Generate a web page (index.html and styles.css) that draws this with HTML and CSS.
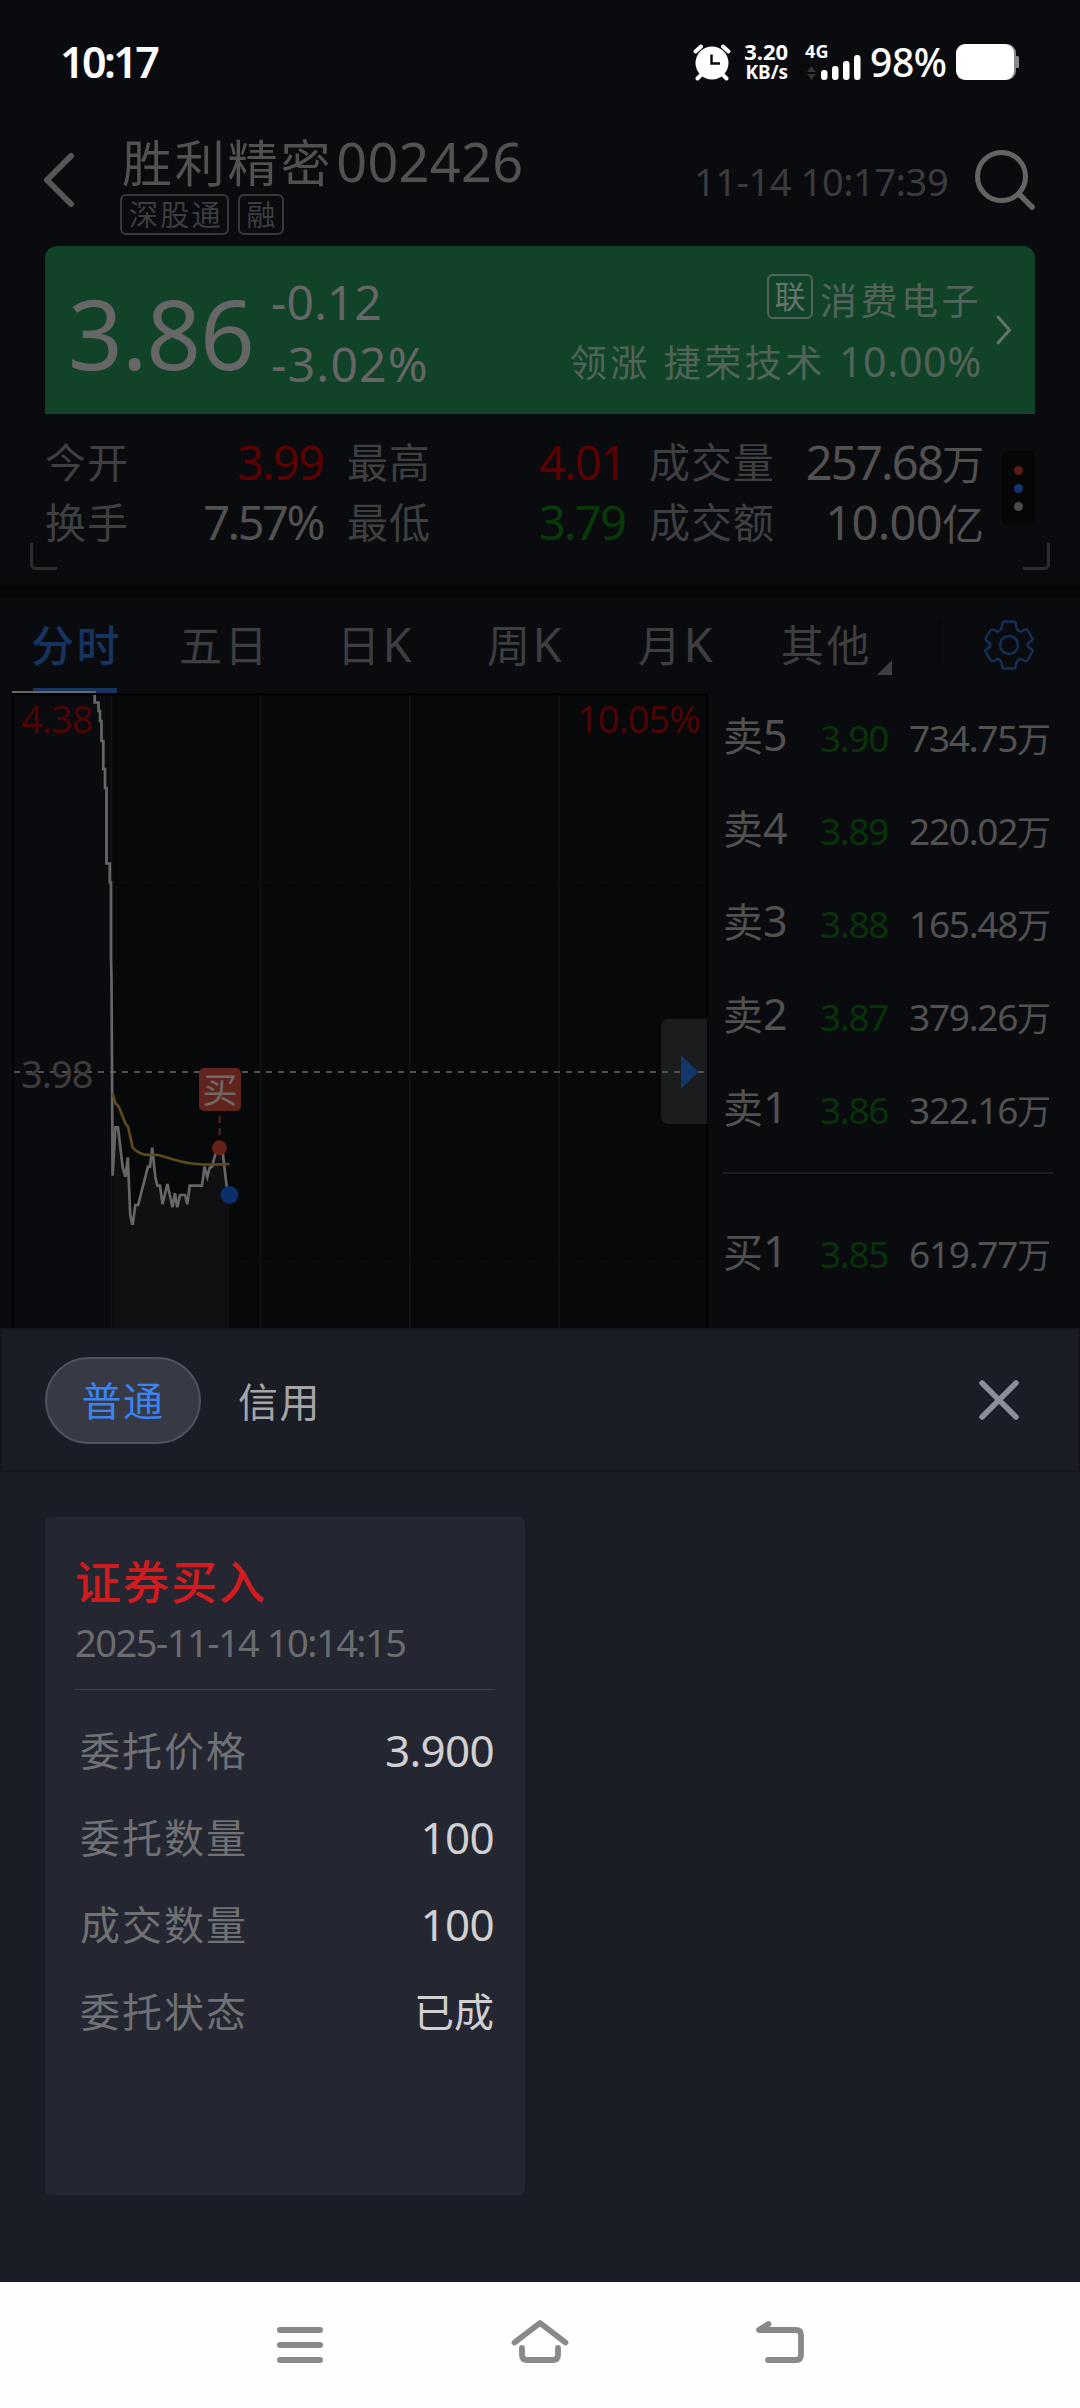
FILE: index.html
```html
<!DOCTYPE html>
<html lang="zh-CN">
<head>
    <meta charset="UTF-8">
    <meta name="viewport" content="width=device-width, initial-scale=1.0">
    <title>胜利精密 002426</title>
    <link rel="stylesheet" href="styles.css">
</head>
<body>
    <div class="status-bar">
        <span class="clock">10:17</span>
        <svg class="alarm" width="38" height="38" viewBox="0 0 38 38">
            <circle cx="19" cy="20" r="16.5" fill="#fff"/>
            <path d="M2.5 8.5L8 3.5M35.500 8.500L30 3.500M8 32L4.500 35.500M30 32L33.500 35.500" stroke="#fff" stroke-width="4" stroke-linecap="round"/>
            <path d="M18.500 11.500V20.500H27" fill="none" stroke="#0a0b0f" stroke-width="2.500"/>
        </svg>
        <div class="speed"><span>3.20</span><span>KB/s</span></div>
        <div class="network">
            <span class="net-type">4G</span>
            <svg width="56" height="36" viewBox="0 0 56 36">
                <path d="M2 28L6.500 22L11 28ZM2 30L6.500 36L11 30Z" fill="#333"/>
                <g fill="#fff">
                    <rect x="16" y="26" width="6.500" height="10" rx="3"/>
                    <rect x="27" y="22" width="6.500" height="14" rx="3"/>
                    <rect x="38" y="17" width="6.500" height="19" rx="3"/>
                    <rect x="49" y="11" width="6.500" height="25" rx="3"/>
                </g>
            </svg>
        </div>
        <span class="percent">98%</span>
        <svg class="battery" width="64" height="36" viewBox="0 0 64 36">
            <rect x="2" y="0" width="58" height="36" rx="9" fill="#8a8a8a"/>
            <rect x="59" y="12" width="4" height="12" rx="1.500" fill="#8a8a8a"/>
            <rect x="0" y="0" width="58" height="36" rx="9" fill="#fff"/>
        </svg>
    </div>

    <div class="header">
        <svg class="back" width="34" height="60" viewBox="0 0 34 60">
            <path d="M29 6L5 30L29 54" fill="none" stroke="#575757" stroke-width="6" stroke-linecap="round" stroke-linejoin="round"/>
        </svg>
        <div class="stock">
            <div class="stock-name">胜利精密<span class="code">002426</span></div>
            <div class="tags"><span class="tag">深股通</span><span class="tag">融</span></div>
        </div>
        <span class="time">11-14 10:17:39</span>
        <svg class="search" width="66" height="66" viewBox="0 0 66 66">
            <circle cx="30.500" cy="29.500" r="24" fill="none" stroke="#646464" stroke-width="5"/>
            <path d="M48 47L61 60" stroke="#646464" stroke-width="5.500" stroke-linecap="round"/>
        </svg>
    </div>

    <div class="banner">
        <span class="price">3.86</span>
        <div class="change"><span>-0.12</span><span class="change-rate">-3.02%</span></div>
        <div class="sector">
            <div class="sector-row"><span class="link-tag">联</span>消费电子</div>
            <div class="sector-row leader">领涨 捷荣技术 <span class="rate">10.00%</span></div>
        </div>
        <svg width="18" height="32" viewBox="0 0 18 32">
            <path d="M3 3L14.500 16L3 29" fill="none" stroke="#65746b" stroke-width="3" stroke-linecap="round" stroke-linejoin="round"/>
        </svg>
    </div>

    <div class="stats">
        <div class="stats-grid">
            <div class="stat"><span>今开</span><b class="red">3.99</b></div>
            <div class="stat"><span>最高</span><b class="red">4.01</b></div>
            <div class="stat"><span>成交量</span><b>257.68<i>万</i></b></div>
            <div class="stat"><span>换手</span><b class="turnover">7.57%</b></div>
            <div class="stat"><span>最低</span><b class="green">3.79</b></div>
            <div class="stat"><span>成交额</span><b class="amount">10.00<i>亿</i></b></div>
        </div>
        <div class="dots"><span class="dot dot-red"></span><span class="dot dot-blue"></span><span class="dot dot-gray"></span></div>
    </div>
    <div class="corners"><span class="corner corner-left"></span><span class="corner corner-right"></span></div>

    <div class="tabs">
        <span class="tab active">分时</span>
        <span class="tab">五日</span>
        <span class="tab">日<em>K</em></span>
        <span class="tab">周<em>K</em></span>
        <span class="tab">月<em>K</em></span>
        <span class="tab">其他</span>
        <span class="triangle"></span>
        <span class="separator"></span>
        <svg class="gear" width="52" height="52" viewBox="0 0 52 52" fill="none" stroke="#14315a" stroke-width="2.300" stroke-linejoin="round">
            <path d="M21 2.500H31Q32.500 2.500 32.700 4L33.500 9Q34 11 36 12L37.500 12.700L42 10.500Q43.500 10 44.300 11L49.300 19Q50 20.500 48.800 21.500L45 24.500Q44 26 45 27.500L48.800 30.500Q50 31.500 49.300 33L44.300 41.500Q43.500 42.500 42 42L37.500 39.700L36 40.500Q34 41.500 33.500 43.500L32.700 48Q32.500 49.500 31 49.500H21Q19.500 49.500 19.300 48L18.500 43.500Q18 41.500 16 40.500L14.500 39.700L10 42Q8.500 42.500 7.700 41.500L2.700 33Q2 31.500 3.200 30.500L7 27.500Q8 26 7 24.500L3.200 21.500Q2 20.500 2.700 19L7.700 11Q8.500 10 10 10.500L14.500 12.700L16 12Q18 11 18.500 9L19.300 4Q19.500 2.500 21 2.500Z"/>
            <circle cx="26" cy="26" r="9"/>
        </svg>
    </div>

    <div class="quote">
        <svg class="chart" width="708" height="638" viewBox="0 690 708 638">
            <rect x="12" y="694" width="696" height="634" fill="#060809"/>
            <rect x="12" y="694" width="99" height="634" fill="#0a0b0f"/>
            <path d="M112.600 1175.700L115.400 1127.300H118L122.600 1166.700L125 1175.700L127.800 1157.300L130.200 1214.300L132 1223.700L135.300 1205L138 1205L148 1166.700L152.200 1147.700L155.300 1176.700L160 1185.700L162.500 1204.300L167.400 1184L172.500 1207.300L174.900 1193.300L177.300 1207.300L180 1195H185L187.300 1204.300L189.700 1185.700H202L204.500 1166.700L207.300 1177L212 1166.700L219.400 1147.700L222.800 1153.300L229.300 1195V1328H112.600Z" fill="#101012"/>
            <g stroke="#131418" stroke-width="1.500">
                <path d="M111.500 694V1328M260.500 694V1328M410 694V1328M558.800 694V1328"/>
            </g>
            <path d="M38 882.500H704M229 1261.500H704" stroke="#0c0d0f" stroke-width="1.500" stroke-dasharray="6 6"/>
            <path d="M12 694.500H708M13 694V1328M707 694V1328" stroke="#010102" stroke-width="2"/>
            <path d="M14 1072H704" stroke="#515151" stroke-width="2" stroke-dasharray="6 6"/>

            <text class="chart-label red" x="21" y="733">4.38</text>
            <text class="chart-label red" x="577" y="733">10.05%</text>
            <text class="chart-label" x="21" y="1088">3.98</text>

            <g fill="none" stroke="#666" stroke-width="2.700">
                <path d="M12 692H96" stroke-width="2"/>
                <path d="M94.700 695V702.500H98.500V711H100V721H101.500V741H103.300V769H105V788H106.500V863.500H109.800V882.500H111V957L111.500 980L112.600 1175.700L115.400 1127.300H118L122.600 1166.700L125 1175.700H125.700L127.800 1157.300L130.200 1214.300L132 1223.700H132.900L135.300 1205H138.100L148 1166.700H150L152.200 1147.700L155.300 1176.700L157.400 1185.700H160L162.500 1204.300L167.400 1184L172.500 1207.300L174.900 1193.300L177.300 1207.300L180 1195H185L187.300 1204.300L189.700 1185.700H202L204.500 1166.700L207.300 1177L209.700 1167.700L212 1166.700L216 1151.700L219.400 1147.700L222.800 1153.300L226.600 1185.700L229.300 1195"/>
            </g>
            <path d="M112.600 1093.300L115.400 1103.300L118.800 1106.700L125.700 1124L128 1126.700L132.600 1147.300Q136 1152 144.600 1154.700L158.400 1155L179 1161Q192 1164.700 213.500 1164.700L229.500 1164" fill="none" stroke="#5e4a1d" stroke-width="2.700"/>

            <rect x="199" y="1068" width="42" height="43" rx="5" fill="#60241d"/>
            <text class="buy-mark" x="220" y="1102.500">买</text>
            <path d="M219.600 1116V1136" stroke="#64231c" stroke-width="1.800" stroke-dasharray="7 5"/>
            <circle cx="219.400" cy="1147.700" r="7.500" fill="#642019"/>
            <circle cx="229.500" cy="1195" r="9" fill="#0a2f69"/>

            <path d="M707 1019H669Q661 1019 661 1027V1116Q661 1124 669 1124H707Z" fill="#1b1c1e"/>
            <path d="M662 1072H704" stroke="#515151" stroke-width="2" stroke-dasharray="6 6"/>
            <path d="M681 1055V1089L698.500 1072Z" fill="#14366b"/>
        </svg>

        <div class="book">
            <div class="book-row"><span class="level">卖<em>5</em></span><span class="book-price">3.90</span><span class="volume">734.75<i>万</i></span></div>
            <div class="book-row"><span class="level">卖<em>4</em></span><span class="book-price">3.89</span><span class="volume">220.02<i>万</i></span></div>
            <div class="book-row"><span class="level">卖<em>3</em></span><span class="book-price">3.88</span><span class="volume">165.48<i>万</i></span></div>
            <div class="book-row"><span class="level">卖<em>2</em></span><span class="book-price">3.87</span><span class="volume">379.26<i>万</i></span></div>
            <div class="book-row"><span class="level">卖<em>1</em></span><span class="book-price">3.86</span><span class="volume">322.16<i>万</i></span></div>
            <div class="book-line"></div>
            <div class="book-row"><span class="level">买<em>1</em></span><span class="book-price">3.85</span><span class="volume">619.77<i>万</i></span></div>
            <div class="book-row"><span class="level">买</span></div>
        </div>
    </div>

    <div class="sheet">
        <div class="sheet-header">
            <span class="pill">普通</span>
            <span class="credit">信用</span>
            <svg class="close" width="44" height="44" viewBox="0 0 44 44">
                <path d="M5 5L39 39M39 5L5 39" stroke="#8c8d9b" stroke-width="5.500" stroke-linecap="round"/>
            </svg>
        </div>
        <div class="card">
            <div class="card-title">证券买入</div>
            <div class="card-date">2025-11-14 10:14:15</div>
            <div class="card-rows">
                <div class="card-row"><span>委托价格</span><b>3.900</b></div>
                <div class="card-row"><span>委托数量</span><b>100</b></div>
                <div class="card-row"><span>成交数量</span><b>100</b></div>
                <div class="card-row"><span>委托状态</span><b class="state">已成</b></div>
            </div>
        </div>
    </div>

    <div class="nav-bar">
        <svg width="52" height="52" viewBox="0 0 52 52">
            <path d="M6 11H46M6 26H46M6 41H46" stroke="#898989" stroke-width="6" stroke-linecap="round"/>
        </svg>
        <svg width="60" height="52" viewBox="0 0 60 52" fill="none" stroke="#898989" stroke-width="5.800" stroke-linecap="round" stroke-linejoin="round">
            <path d="M4.500 23.500L30 4L55.500 23.500M12 29V36Q12 41 17 41H43Q48 41 48 36V29"/>
        </svg>
        <svg width="52" height="52" viewBox="0 0 52 52" fill="none" stroke="#898989" stroke-width="5.800" stroke-linecap="round" stroke-linejoin="round">
            <path d="M14.500 5L5 11H42Q47 11 47 16V36Q47 41 42 41H14"/>
        </svg>
    </div>
</body>
</html>
```

FILE: styles.css
```css
* {
    box-sizing: border-box;
}

body {
    margin: 0;
    width: 1080px;
    height: 2408px;
    overflow: hidden;
    background-color: #0a0b0f;
    color: #515151;
    font-family: "Noto Sans", "Noto Sans CJK SC", sans-serif;
    display: flex;
    flex-direction: column;
}

svg {
    display: block;
    flex-shrink: 0;
}

b, i, em {
    font-weight: normal;
    font-style: normal;
}

/* status bar */
.status-bar {
    height: 123px;
    padding: 0 60px 0 60px;
    display: flex;
    align-items: center;
    color: #fff;
    white-space: nowrap;
}

.clock {
    width: 634px;
    font-size: 43px;
    font-weight: 600;
    letter-spacing: -2.6px;
}

.speed {
    width: 60px;
    margin-left: 0;
    padding-right: 3px;
    display: flex;
    flex-direction: column;
    align-items: flex-end;
    font-size: 22px;
    font-weight: 700;
    line-height: 21px;
}

.speed span:last-child {
    font-size: 19px;
}

.network {
    display: grid;
    width: 56px;
    height: 36px;
    margin-left: 14px;
}

.network > * {
    grid-area: 1 / 1;
}

.net-type {
    font-size: 18px;
    font-weight: 700;
    line-height: 15px;
}

.percent {
    width: 86px;
    margin-left: 9px;
    font-size: 39px;
    font-weight: 500;
    letter-spacing: -0.5px;
}

/* header */
.header {
    height: 123px;
    padding-left: 42px;
    display: flex;
    align-items: flex-start;
}

.back {
    margin-top: 27px;
}

.stock {
    width: 430px;
    margin-left: 44px;
}

.stock-name {
    height: 71px;
    padding-left: 2px;
    font-size: 50px;
    line-height: 77px;
    letter-spacing: 2.800px;
    white-space: nowrap;
}

.code {
    margin-left: 3px;
    font-size: 54px;
    letter-spacing: 0.300px;
}

.tags {
    display: flex;
    gap: 9px;
}

.tag {
    height: 41px;
    padding: 0 4px 0 7px;
    border: 2px solid #38393b;
    border-radius: 6px;
    color: #3c3d3f;
    font-size: 29px;
    line-height: 38px;
    letter-spacing: 2.200px;
}

.time {
    width: 257px;
    margin-left: 144px;
    margin-top: 33px;
    color: #3a3b3d;
    font-size: 38px;
    line-height: 50px;
    letter-spacing: -0.400px;
    white-space: nowrap;
}

.search {
    margin-left: 20px;
    margin-top: 24px;
}

/* price banner */
.banner {
    height: 168px;
    margin: 0 45px;
    padding: 0 22px 0 23px;
    border-radius: 12px 12px 0 0;
    background-color: #104328;
    color: #666;
    display: flex;
    align-items: center;
    white-space: nowrap;
}

.price {
    width: 203px;
    margin-top: 6px;
    font-size: 96px;
    line-height: 120px;
    letter-spacing: -1.200px;
}

.change {
    margin-top: 5px;
    display: flex;
    flex-direction: column;
    font-size: 48px;
    line-height: 62px;
}

.change-rate {
    letter-spacing: 1.200px;
}

.sector {
    margin-left: auto;
    margin-right: 13px;
    padding-bottom: 1px;
    color: #52645a;
    font-size: 37px;
    letter-spacing: 3.500px;
}

.sector-row {
    height: 62px;
    display: flex;
    justify-content: flex-end;
    align-items: center;
    white-space: pre;
}

.link-tag {
    width: 46px;
    height: 45px;
    margin-right: 7px;
    margin-top: -4px;
    border: 2px solid #52645a;
    border-radius: 6px;
    color: #66746c;
    font-size: 31px;
    line-height: 40px;
    letter-spacing: 0;
    text-align: center;
}

.rate {
    font-size: 41px;
    letter-spacing: 0.700px;
}

/* statistics */
.stats {
    height: 129px;
    padding: 18px 45px 0 45px;
    display: flex;
    justify-content: space-between;
}

.stats-grid {
    display: grid;
    grid-template-columns: 278px 278px 335px;
    grid-auto-rows: 60px;
    column-gap: 24px;
}

.stat {
    display: flex;
    justify-content: space-between;
    line-height: 60px;
    white-space: nowrap;
}

.stat span {
    color: #3e3f41;
    font-size: 41px;
    letter-spacing: 1px;
}

.stat b {
    font-size: 47px;
    letter-spacing: -1.800px;
}

.stat b i {
    font-size: 42px;
    letter-spacing: 0;
}

.stat .turnover {
    letter-spacing: -2.500px;
}

.stat .amount {
    letter-spacing: -0.700px;
}

.stat .red {
    color: #5a0202;
}

.stat .green {
    color: #073a08;
}

.dots {
    width: 33px;
    height: 75px;
    margin-top: 19px;
    border-radius: 6px;
    background-color: #060607;
    display: flex;
    flex-direction: column;
    align-items: center;
    justify-content: center;
    gap: 9px;
}

.dot {
    width: 9px;
    height: 9px;
    border-radius: 50%;
}

.dot-red {
    background-color: #5a1d17;
}

.dot-blue {
    background-color: #14366b;
}

.dot-gray {
    background-color: #4b4b4b;
}

.corners {
    height: 42px;
    padding: 0 30px;
    display: flex;
    justify-content: space-between;
}

.corner {
    width: 27px;
    height: 27px;
    border-bottom: 3px solid #2d2d2e;
}

.corner-left {
    border-left: 3px solid #2d2d2e;
    border-bottom-left-radius: 6px;
}

.corner-right {
    border-right: 3px solid #2d2d2e;
    border-bottom-right-radius: 6px;
}

/* period tabs */
.tabs {
    height: 105px;
    border-top: 12px solid #060708;
    padding-left: 31px;
    display: flex;
    color: #3d3e40;
    font-size: 43px;
    line-height: 98px;
    letter-spacing: 2.500px;
    white-space: nowrap;
}

.tab {
    width: 88px;
    margin-right: 61px;
}

.tab em {
    font-size: 47px;
    line-height: 1;
    letter-spacing: 0;
}

.tab:nth-child(2) {
    margin-right: 70px;
}

.tab:nth-child(3) {
    width: 84px;
    margin-right: 66px;
}

.tab:nth-child(4) {
    width: 86px;
    margin-right: 65px;
}

.tab:nth-child(5) {
    width: 84px;
    margin-right: 59px;
}

.tab:nth-child(6) {
    margin-right: 8px;
}

.tab.active {
    width: 84px;
    margin-right: 62px;
    margin-bottom: -3px;
    margin-left: 2px;
    border-bottom: 5px solid #16345f;
    color: #16345f;
    font-weight: 500;
    text-indent: -2px;
}

.triangle {
    width: 15px;
    height: 15px;
    margin-top: 63px;
    background-color: #3d3e40;
    clip-path: polygon(100% 0, 100% 100%, 0 100%);
}

.separator {
    width: 2px;
    height: 45px;
    margin-top: 24px;
    margin-left: 46px;
    background-color: #060708;
}

.gear {
    margin-left: 43px;
    margin-top: 22px;
}

/* chart and order book */
.quote {
    height: 638px;
    display: flex;
    overflow: hidden;
}

.chart-label {
    fill: #3c3c3c;
    font-size: 38px;
    letter-spacing: -1px;
}

.chart-label.red {
    fill: #4c0404;
}

.buy-mark {
    fill: #716765;
    font-size: 35px;
    text-anchor: middle;
}

.book {
    width: 372px;
    height: 638px;
    padding-left: 15px;
    padding-right: 29px;
    overflow: hidden;
}

.book-row {
    height: 93px;
    display: flex;
    line-height: 96px;
    white-space: nowrap;
}

.level {
    width: 97px;
    line-height: 89px;
    font-size: 40px;
}

.level em {
    font-size: 43px;
}

.book-price {
    width: 82px;
    color: #083309;
    font-size: 37px;
    letter-spacing: -1.300px;
}

.volume {
    margin-left: auto;
    font-size: 37px;
    letter-spacing: -1.300px;
}

.volume i {
    font-size: 34px;
    letter-spacing: 0;
}

.book-line {
    height: 2px;
    margin: 17px -2px 32px 0;
    background-color: #1c1d20;
}

/* order sheet */
.sheet {
    height: 954px;
    background-color: #1b1d26;
}

.sheet-header {
    height: 144px;
    padding: 0 57px 0 43px;
    border: 2px solid #15161d;
    display: flex;
    align-items: center;
    font-size: 40px;
    letter-spacing: 1.500px;
}

.pill {
    width: 156px;
    height: 87px;
    border: 2px solid #50525e;
    border-radius: 44px;
    background-color: #373944;
    color: #3a83f1;
    line-height: 84px;
    text-align: center;
}

.credit {
    margin-left: 37px;
    color: #a5a5a7;
}

.close {
    margin-left: auto;
}

.card {
    width: 480px;
    height: 678px;
    margin: 45px 0 0 45px;
    padding: 29px 30px 0 30px;
    border-radius: 6px;
    background-color: #242631;
    white-space: nowrap;
}

.card-title {
    height: 70px;
    color: #d01c1e;
    font-size: 46px;
    font-weight: 500;
    line-height: 70px;
    letter-spacing: 2px;
}

.card-date {
    height: 74px;
    border-bottom: 1px solid #3e4145;
    color: #6b6c70;
    font-size: 38px;
    line-height: 52px;
    letter-spacing: -1.500px;
}

.card-rows {
    padding-top: 17px;
}

.card-row {
    height: 87px;
    padding-left: 5px;
    display: flex;
    justify-content: space-between;
    color: #707174;
    font-size: 40px;
    line-height: 87px;
    letter-spacing: 2px;
}

.card-row b {
    margin-right: 1px;
    color: #d0d0d2;
    font-size: 44px;
    letter-spacing: -0.700px;
}

.card-row .state {
    font-size: 40px;
    letter-spacing: 0;
}

/* system navigation */
.nav-bar {
    height: 126px;
    padding: 37px 274px 0 274px;
    background-color: #fefefe;
    display: flex;
    justify-content: space-between;
}
```
